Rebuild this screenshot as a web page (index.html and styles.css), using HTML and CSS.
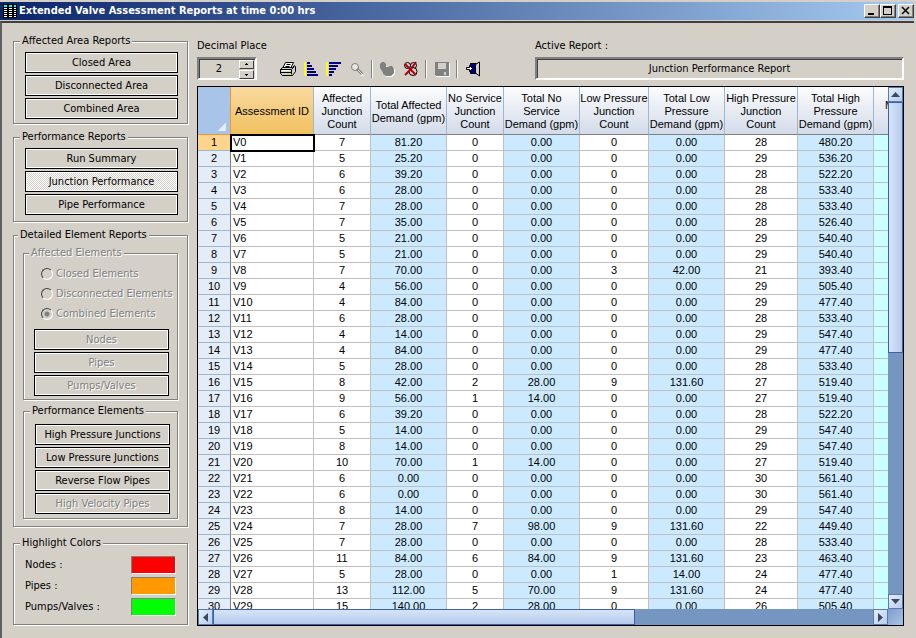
FILE: index.html
```
<!DOCTYPE html>
<html lang="en">

<head>
  <meta charset="utf-8">
  <title>Extended Valve Assessment Reports</title>
  <link rel="stylesheet" href="styles.css">
</head>

<body>
  <header class="titlebar">
    <svg class="app-icon" width="14" height="14" viewBox="0 0 14 14" shape-rendering="crispEdges">
      <path fill="#000" d="M0 0h14v14H0z" />
      <path fill="#0ff" d="M1 1h3v2H1zM6 1h3v2H6zM11 1h2v2h-2z" />
      <path fill="#fff" d="M1 4h3v1H1zM6 4h3v1H6zM11 4h2v1h-2zM1 6h3v1H1zM6 6h3v1H6zM11 6h2v1h-2zM1 8h3v1H1zM6 8h3v1H6zM11 8h2v1h-2zM1 10h3v1H1zM6 10h3v1H6zM11 10h2v1h-2zM1 12h3v1H1zM6 12h3v1H6zM11 12h2v1h-2z" />
    </svg>
    <h1>Extended Valve Assessment Reports at time 0:00 hrs</h1>
    <div class="window-buttons">
      <button aria-label="Minimize"><svg width="12" height="10" viewBox="0 0 12 10"><path d="M2 7h6v2H2z" /></svg></button>
      <button aria-label="Maximize"><svg width="12" height="10" viewBox="0 0 12 10"><path fill-rule="evenodd" d="M1 0h9v9H1zM2 2v6h7V2z" /></svg></button>
      <button aria-label="Close" class="close"><svg width="12" height="10" viewBox="0 0 12 10"><path fill="none" stroke="#000" stroke-width="1.500" d="M2 1l7 7M9 1l-7 7" /></svg></button>
    </div>
  </header>

  <main class="window">
    <aside class="sidebar">
      <fieldset class="group affected">
        <legend>Affected Area Reports</legend>
        <button>Closed Area</button>
        <button>Disconnected Area</button>
        <button>Combined Area</button>
      </fieldset>

      <fieldset class="group performance">
        <legend>Performance Reports</legend>
        <button>Run Summary</button>
        <button class="active" aria-pressed="true">Junction Performance</button>
        <button>Pipe Performance</button>
      </fieldset>

      <fieldset class="group detailed">
        <legend>Detailed Element Reports</legend>
        <fieldset class="group elements" disabled>
          <legend>Affected Elements</legend>
          <div class="radios">
            <label><input type="radio" name="elements"> Closed Elements</label>
            <label><input type="radio" name="elements"> Disconnected Elements</label>
            <label><input type="radio" name="elements" checked> Combined Elements</label>
          </div>
          <button>Nodes</button>
          <button>Pipes</button>
          <button>Pumps/Valves</button>
        </fieldset>
        <fieldset class="group perf-elements">
          <legend>Performance Elements</legend>
          <button>High Pressure Junctions</button>
          <button>Low Pressure Junctions</button>
          <button>Reverse Flow Pipes</button>
          <button disabled>High Velocity Pipes</button>
        </fieldset>
      </fieldset>

      <fieldset class="group colors">
        <legend>Highlight Colors</legend>
        <div class="color-row"><span id="nodesLabel">Nodes :</span><button class="swatch red" aria-labelledby="nodesLabel"></button></div>
        <div class="color-row"><span id="pipesLabel">Pipes :</span><button class="swatch orange" aria-labelledby="pipesLabel"></button></div>
        <div class="color-row"><span id="pumpsLabel">Pumps/Valves :</span><button class="swatch green" aria-labelledby="pumpsLabel"></button></div>
      </fieldset>
    </aside>

    <section class="report">
      <div class="report-head">
        <div>
          <label for="decimals">Decimal Place</label>
          <div class="tools">
            <div class="spinner">
              <input id="decimals" type="number" value="2" min="0">
              <div class="spin-buttons">
                <button id="spinUp" aria-label="More"><svg width="5" height="3" viewBox="0 0 5 3"><path d="M1 2h3v-1H3V0H2v1H1z" /></svg></button>
                <button id="spinDown" aria-label="Less"><svg width="5" height="3" viewBox="0 0 5 3"><path d="M1 1h3v1H3v1H2V2H1z" /></svg></button>
              </div>
            </div>
            <div class="toolbar">
              <button aria-label="Print">
                <svg width="18" height="16" viewBox="0 0 18 16">
                  <path fill="#fff" stroke="#000" d="M6.500 1.500h8l-3 6h-8z" />
                  <path stroke="#000" d="M7.500 3.500h4M6.500 5.500h4" />
                  <path fill="#d4d0c8" stroke="#000" d="M1.500 8.500l2-2h10l2-2 1 1v5l-3 4h-10l-2-2z" />
                  <path fill="none" stroke="#000" d="M1.500 8.500h11l3-3M12.500 8.500v5M2 11.500h10" />
                  <path stroke="#fff" d="M3 9.500h8" />
                  <path stroke="#e8e000" stroke-width="2" d="M8 13h3" />
                </svg>
              </button>
              <button aria-label="Sort ascending">
                <svg width="16" height="16" viewBox="0 0 16 16" shape-rendering="crispEdges">
                  <path fill="#ff0" d="M1 1h2v14H1z" />
                  <path fill="#000080" d="M4 1h3v2H4zM4 4h5v2H4zM4 7h7v2H4zM4 10h9v2H4zM4 13h11v2H4z" />
                </svg>
              </button>
              <button aria-label="Sort descending">
                <svg width="16" height="16" viewBox="0 0 16 16" shape-rendering="crispEdges">
                  <path fill="#ff0" d="M0 1h2v14H0z" />
                  <path fill="#000080" d="M3 1h12v2H3zM3 4h9v2H3zM3 7h7v2H3zM3 10h5v2H3zM3 13h3v2H3z" />
                </svg>
              </button>
              <button aria-label="Find" disabled>
                <svg width="14" height="14" viewBox="0 0 14 14">
                  <path stroke="#fff" stroke-width="2" d="M8 9l5 5" />
                  <circle cx="5" cy="5" r="3.500" fill="#e8e6e0" stroke="#808080" />
                  <path stroke="#808080" stroke-width="3" d="M7 7l5 5" />
                  <path stroke="#e8e6e0" d="M8 8l4 4" />
                </svg>
              </button>
              <span class="sep"></span>
              <button aria-label="Highlight" disabled>
                <svg width="17" height="16" viewBox="0 0 17 16">
                  <path fill="#fff" d="M3 4l13 4v5l-3 3H8l-5-4z" />
                  <path fill="#808080" d="M1 3l2-2h2l2 2v3h2l2-1h2l2 3v4l-3 3H7l-3-2-1-3-2-3z" />
                </svg>
              </button>
              <button aria-label="Clear highlight">
                <svg width="16" height="16" viewBox="0 0 16 16">
                  <g fill="#d4d0c8" stroke="#000">
                    <circle cx="4.500" cy="4.500" r="3" />
                    <circle cx="10.500" cy="4.500" r="3" />
                    <circle cx="10" cy="10.500" r="4" />
                  </g>
                  <path fill="none" stroke="#b00010" stroke-width="2" d="M2 3l11 11M13 1L8 8l-6 6" />
                </svg>
              </button>
              <span class="sep"></span>
              <button aria-label="Save" disabled>
                <svg width="16" height="16" viewBox="0 0 16 16" shape-rendering="crispEdges">
                  <path fill="#fff" d="M2 2h14v14H2z" />
                  <path fill="#808080" d="M1 1h14v14H2l-1-1z" />
                  <path fill="#d4d0c8" d="M4 2h8v6H4zM10 11h2v3h-2z" />
                </svg>
              </button>
              <span class="sep"></span>
              <button aria-label="Exit">
                <svg width="16" height="16" viewBox="0 0 16 16">
                  <path fill="#000080" stroke="#000" d="M5.500 2.500h6v10h-6z" />
                  <path fill="#d4d0c8" stroke="#000" d="M10.500 3.500l4-2.500v14l-4-3z" />
                  <path fill="#fff" stroke="#000" d="M1.500 6.500h3v-2l3 3-3 3v-2h-3z" />
                </svg>
              </button>
            </div>
          </div>
        </div>
        <div>
          <label for="activeReport">Active Report :</label>
          <input id="activeReport" class="active-report" type="text" value="Junction Performance Report" readonly>
        </div>
      </div>

      <div class="grid">
        <div class="viewport">
          <table>
            <colgroup>
              <col class="w-num"><col class="w-id"><col class="w-count"><col class="w-demand"><col class="w-count"><col class="w-demand"><col class="w-low"><col class="w-demand"><col class="w-high"><col class="w-demand"><col class="w-demand">
            </colgroup>
            <thead>
              <tr>
                <th class="corner"></th>
                <th class="selected">Assessment ID</th>
                <th>Affected<br>Junction<br>Count</th>
                <th>Total Affected<br>Demand (gpm)</th>
                <th>No Service<br>Junction<br>Count</th>
                <th>Total No<br>Service<br>Demand (gpm)</th>
                <th>Low Pressure<br>Junction<br>Count</th>
                <th>Total Low<br>Pressure<br>Demand (gpm)</th>
                <th>High Pressure<br>Junction<br>Count</th>
                <th>Total High<br>Pressure<br>Demand (gpm)</th>
                <th class="cut">M<br>&nbsp;</th>
              </tr>
            </thead>
            <tbody id="rows"></tbody>
          </table>
        </div>
        <div class="vscroll">
          <button aria-label="Scroll up"><svg width="9" height="5" viewBox="0 0 9 5"><path d="M0 5l4.500-5L9 5z" /></svg></button>
          <div class="track"><div class="thumb"></div></div>
          <button aria-label="Scroll down"><svg width="9" height="5" viewBox="0 0 9 5"><path d="M0 0h9L4.500 5z" /></svg></button>
        </div>
        <div class="hscroll">
          <button aria-label="Scroll left"><svg width="5" height="9" viewBox="0 0 5 9"><path d="M5 0v9L0 4.500z" /></svg></button>
          <div class="track"><div class="thumb"></div></div>
          <button aria-label="Scroll right"><svg width="5" height="9" viewBox="0 0 5 9"><path d="M0 0l5 4.500L0 9z" /></svg></button>
        </div>
        <div class="grip"></div>
      </div>
    </section>
  </main>

  <script>
    // affected count/demand, no service count/demand, low count/demand, high count/demand
    const data = [
      [7, 81.2, 0, 0, 0, 0, 28, 480.2],
      [5, 25.2, 0, 0, 0, 0, 29, 536.2],
      [6, 39.2, 0, 0, 0, 0, 28, 522.2],
      [6, 28, 0, 0, 0, 0, 28, 533.4],
      [7, 28, 0, 0, 0, 0, 28, 533.4],
      [7, 35, 0, 0, 0, 0, 28, 526.4],
      [5, 21, 0, 0, 0, 0, 29, 540.4],
      [5, 21, 0, 0, 0, 0, 29, 540.4],
      [7, 70, 0, 0, 3, 42, 21, 393.4],
      [4, 56, 0, 0, 0, 0, 29, 505.4],
      [4, 84, 0, 0, 0, 0, 29, 477.4],
      [6, 28, 0, 0, 0, 0, 28, 533.4],
      [4, 14, 0, 0, 0, 0, 29, 547.4],
      [4, 84, 0, 0, 0, 0, 29, 477.4],
      [5, 28, 0, 0, 0, 0, 28, 533.4],
      [8, 42, 2, 28, 9, 131.6, 27, 519.4],
      [9, 56, 1, 14, 0, 0, 27, 519.4],
      [6, 39.2, 0, 0, 0, 0, 28, 522.2],
      [5, 14, 0, 0, 0, 0, 29, 547.4],
      [8, 14, 0, 0, 0, 0, 29, 547.4],
      [10, 70, 1, 14, 0, 0, 27, 519.4],
      [6, 0, 0, 0, 0, 0, 30, 561.4],
      [6, 0, 0, 0, 0, 0, 30, 561.4],
      [8, 14, 0, 0, 0, 0, 29, 547.4],
      [7, 28, 7, 98, 9, 131.6, 22, 449.4],
      [7, 28, 0, 0, 0, 0, 28, 533.4],
      [11, 84, 6, 84, 9, 131.6, 23, 463.4],
      [5, 28, 0, 0, 1, 14, 24, 477.4],
      [13, 112, 5, 70, 9, 131.6, 24, 477.4],
      [15, 140, 2, 28, 0, 0, 26, 505.4]
    ]

    const decimals = document.getElementById('decimals')

    function renderRows() {
      const places = Math.max(0, Number(decimals.value))
      document.getElementById('rows').innerHTML = data.map((row, i) => {
        const cells = row.map((value, c) => c % 2
          ? `<td class="demand">${value.toFixed(places)}</td>`
          : `<td>${value}</td>`).join('')
        const current = i === 0 ? ' current' : ''
        return `<tr><th class="num${current}">${i + 1}</th><td class="id${current}">V${i}</td>${cells}<td class="aqua"></td></tr>`
      }).join('')
    }

    document.getElementById('spinUp').addEventListener('click', () => {
      decimals.stepUp()
      renderRows()
    })

    document.getElementById('spinDown').addEventListener('click', () => {
      decimals.stepDown()
      renderRows()
    })

    decimals.addEventListener('change', renderRows)
    renderRows()
  </script>
</body>

</html>
```
FILE: styles.css
```
* {
  box-sizing: border-box;
}

body {
  display: flex;
  flex-direction: column;
  height: 100vh;
  margin: 0;
  padding: 2px 2px 0 0;
  background-color: #d4d0c8;
  color: #000;
  font: 11px/14px "DejaVu Sans Condensed", Tahoma, sans-serif;
  overflow: hidden;
}

button,
input {
  margin: 0;
  padding: 0;
  color: inherit;
  font: inherit;
}

button {
  display: flex;
  align-items: center;
  justify-content: center;
}

/* title bar */
.titlebar {
  display: flex;
  align-items: center;
  gap: 2px;
  height: 18px;
  padding: 0 0 0 3px;
  background: linear-gradient(to right, #0a246a, #a6caf0);
}

.titlebar h1 {
  flex: 1;
  margin: 0;
  color: #fff;
  font-size: 11px;
  font-weight: bold;
  white-space: nowrap;
}

.window-buttons {
  display: flex;
}

.window-buttons button {
  width: 16px;
  height: 14px;
  border: 1px solid;
  border-color: #fff #404040 #404040 #fff;
  background-color: #d4d0c8;
  box-shadow: inset -1px -1px 0 #808080;
}

.window-buttons .close {
  margin-left: 2px;
}

.window {
  display: flex;
  flex: 1;
  gap: 9px;
  min-height: 0;
  margin-top: 1px;
  padding: 11px 10px 12px 11px;
  border-top: 2px solid #404040;
  border-left: 2px solid #606060;
}

/* left side */
.sidebar {
  display: flex;
  flex-direction: column;
  flex: none;
  gap: 6px;
  width: 175px;
}

.group {
  min-width: 0;
  margin: 0;
  padding: 4px 9px 4px 11px;
  border: 1px solid #808080;
  box-shadow: 1px 1px 0 #fff, inset 1px 1px 0 #fff;
}

.group legend {
  margin-left: -5px;
  padding: 0 2px;
  background-color: #d4d0c8;
  white-space: nowrap;
}

.group button {
  width: 100%;
  height: 21px;
  border: 1px solid #000;
  background-color: #d4d0c8;
  box-shadow: inset 1px 1px 0 #fff, inset -1px -1px 0 #fff;
  white-space: nowrap;
}

.group button + button {
  margin-top: 2px;
}

.group .active {
  background: repeating-conic-gradient(#fff 0 25%, #d4d0c8 0 50%) 0 0 / 2px 2px;
}

.group button:disabled,
.group:disabled {
  color: #808080;
  text-shadow: 1px 1px 0 #fff;
}

.performance {
  padding-bottom: 6px;
}

.detailed {
  padding: 4px 9px 7px;
}

.elements {
  padding: 4px 8px 3px 10px;
}

.perf-elements {
  margin-top: 4px;
  padding: 6px 7px 4px 11px;
}

.radios {
  margin-bottom: 5px;
  padding-left: 7px;
}

.radios label {
  display: flex;
  align-items: center;
  gap: 3px;
  height: 20px;
  white-space: nowrap;
}

.radios input {
  flex: none;
  width: 12px;
  height: 12px;
  border: 1px solid;
  border-color: #404040 #fff #fff #404040;
  border-radius: 50%;
  appearance: none;
}

.radios input:checked {
  background: radial-gradient(circle, #808080 2px, transparent 3px);
}

.colors {
  margin-top: 3px;
  padding: 6px 11px 8px 11px;
}

.color-row {
  display: flex;
  align-items: center;
  justify-content: space-between;
}

.color-row + .color-row {
  margin-top: 3px;
}

.color-row .swatch {
  width: 45px;
  height: 18px;
  border-color: #808080 #fff #fff #808080;
  box-shadow: none;
}

.color-row .red {
  background-color: #f00;
}

.color-row .orange {
  background-color: #f90;
}

.color-row .green {
  background-color: #0f0;
}

/* right side */
.report {
  display: flex;
  flex: 1;
  flex-direction: column;
  gap: 6px;
  min-width: 0;
  padding-top: 5px;
}

.report-head {
  display: grid;
  grid-template-columns: 338px 1fr;
}

.report-head label {
  display: block;
  margin-bottom: 4px;
}

.tools {
  display: flex;
  gap: 19px;
}

.spinner,
.active-report {
  height: 23px;
  border: 2px solid;
  border-color: #808080 #fff #fff #808080;
  background-color: #d4d0c8;
  box-shadow: inset 1px 1px 0 #404040;
}

.spinner {
  display: flex;
  width: 60px;
}

.spinner input {
  flex: 1;
  width: 40px;
  border: 0;
  background: none;
  text-align: center;
  appearance: textfield;
}

.spinner input::-webkit-inner-spin-button {
  display: none;
}

.spin-buttons {
  width: 16px;
}

.spin-buttons button {
  width: 15px;
  height: 9px;
  margin-top: 1px;
  border: 1px solid;
  border-color: #fff #404040 #404040 #fff;
  background-color: #d4d0c8;
}

.active-report {
  display: block;
  width: 100%;
  text-align: center;
}

.toolbar {
  display: flex;
  align-items: center;
}

.toolbar button {
  width: 23px;
  height: 22px;
  border: 0;
  background: none;
}

.sep {
  width: 2px;
  height: 18px;
  margin: 0 3px;
  border-left: 1px solid #808080;
  border-right: 1px solid #fff;
}

.grid {
  display: grid;
  flex: 1;
  grid-template-columns: 1fr 15px;
  grid-template-rows: 1fr 16px;
  min-height: 0;
  border: 1px solid #000;
}

.viewport {
  min-width: 0;
  min-height: 0;
  overflow: hidden;
  background-color: #fff;
}

table {
  width: 752px;
  border-collapse: separate;
  border-spacing: 0;
  table-layout: fixed;
  font: 11px/13px "Liberation Sans", Arial, sans-serif;
}

.w-num {
  width: 33px;
}

.w-id {
  width: 83px;
}

.w-count {
  width: 57px;
}

.w-demand {
  width: 76px;
}

.w-low {
  width: 69px;
}

.w-high {
  width: 73px;
}

th,
td {
  height: 16px;
  padding: 0;
  border-right: 1px solid #c0c0c0;
  border-bottom: 1px solid #c0c0c0;
  font-weight: normal;
  line-height: 15px;
  text-align: center;
  white-space: nowrap;
}

thead th {
  height: 48px;
  padding-top: 2px;
  border-right-color: #9eb6ce;
  border-bottom-color: #808080;
  background: linear-gradient(#fbfcfd, #d3dbe9);
  line-height: 13px;
}

thead .selected {
  border-right-color: #9eb6ce;
  background: linear-gradient(#f9d99f, #f1c15f);
}

thead .corner {
  border-right-color: #f29536;
  border-bottom-color: #f29536;
  background: linear-gradient(135deg, transparent 50%, #e4ecf7 50%) right 4px bottom 3px / 8px 8px no-repeat, #a9c4e9;
}

thead .cut {
  padding-left: 11px;
  text-align: left;
}

.num {
  border-right-color: #808080;
  border-bottom-color: #9eb6ce;
  background-color: #e4ecf7;
}

.num.current {
  border-right-color: #f29536;
  background-color: #ffd58d;
}

.id {
  padding-left: 2px;
  text-align: left;
}

.id.current {
  outline: 2px solid #000;
  outline-offset: -1px;
}

.demand {
  background-color: #cceaff;
}

.aqua {
  background-color: #ccffff;
}

/* scroll bars */
.vscroll,
.hscroll {
  display: flex;
  background-color: #7496c0;
}

.vscroll {
  flex-direction: column;
}

.vscroll button,
.hscroll button {
  flex: none;
  width: 15px;
  height: 15px;
  border: 1px solid #5a7ab5;
  background: linear-gradient(135deg, #e3eefc, #b7cdee);
}

.hscroll button {
  height: 16px;
}

.vscroll svg,
.hscroll svg {
  fill: #3c4a60;
}

.track {
  flex: 1;
}

.thumb {
  border: 1px solid #3f5fa8;
}

.vscroll .thumb {
  height: 51%;
  background: linear-gradient(to right, #d6e4f8, #b4caec);
}

.hscroll .thumb {
  width: 64%;
  height: 16px;
  background: linear-gradient(#d6e4f8, #b4caec);
}

.grip {
  background: linear-gradient(135deg, #7d9cc8, #a9c4e9);
}
```
